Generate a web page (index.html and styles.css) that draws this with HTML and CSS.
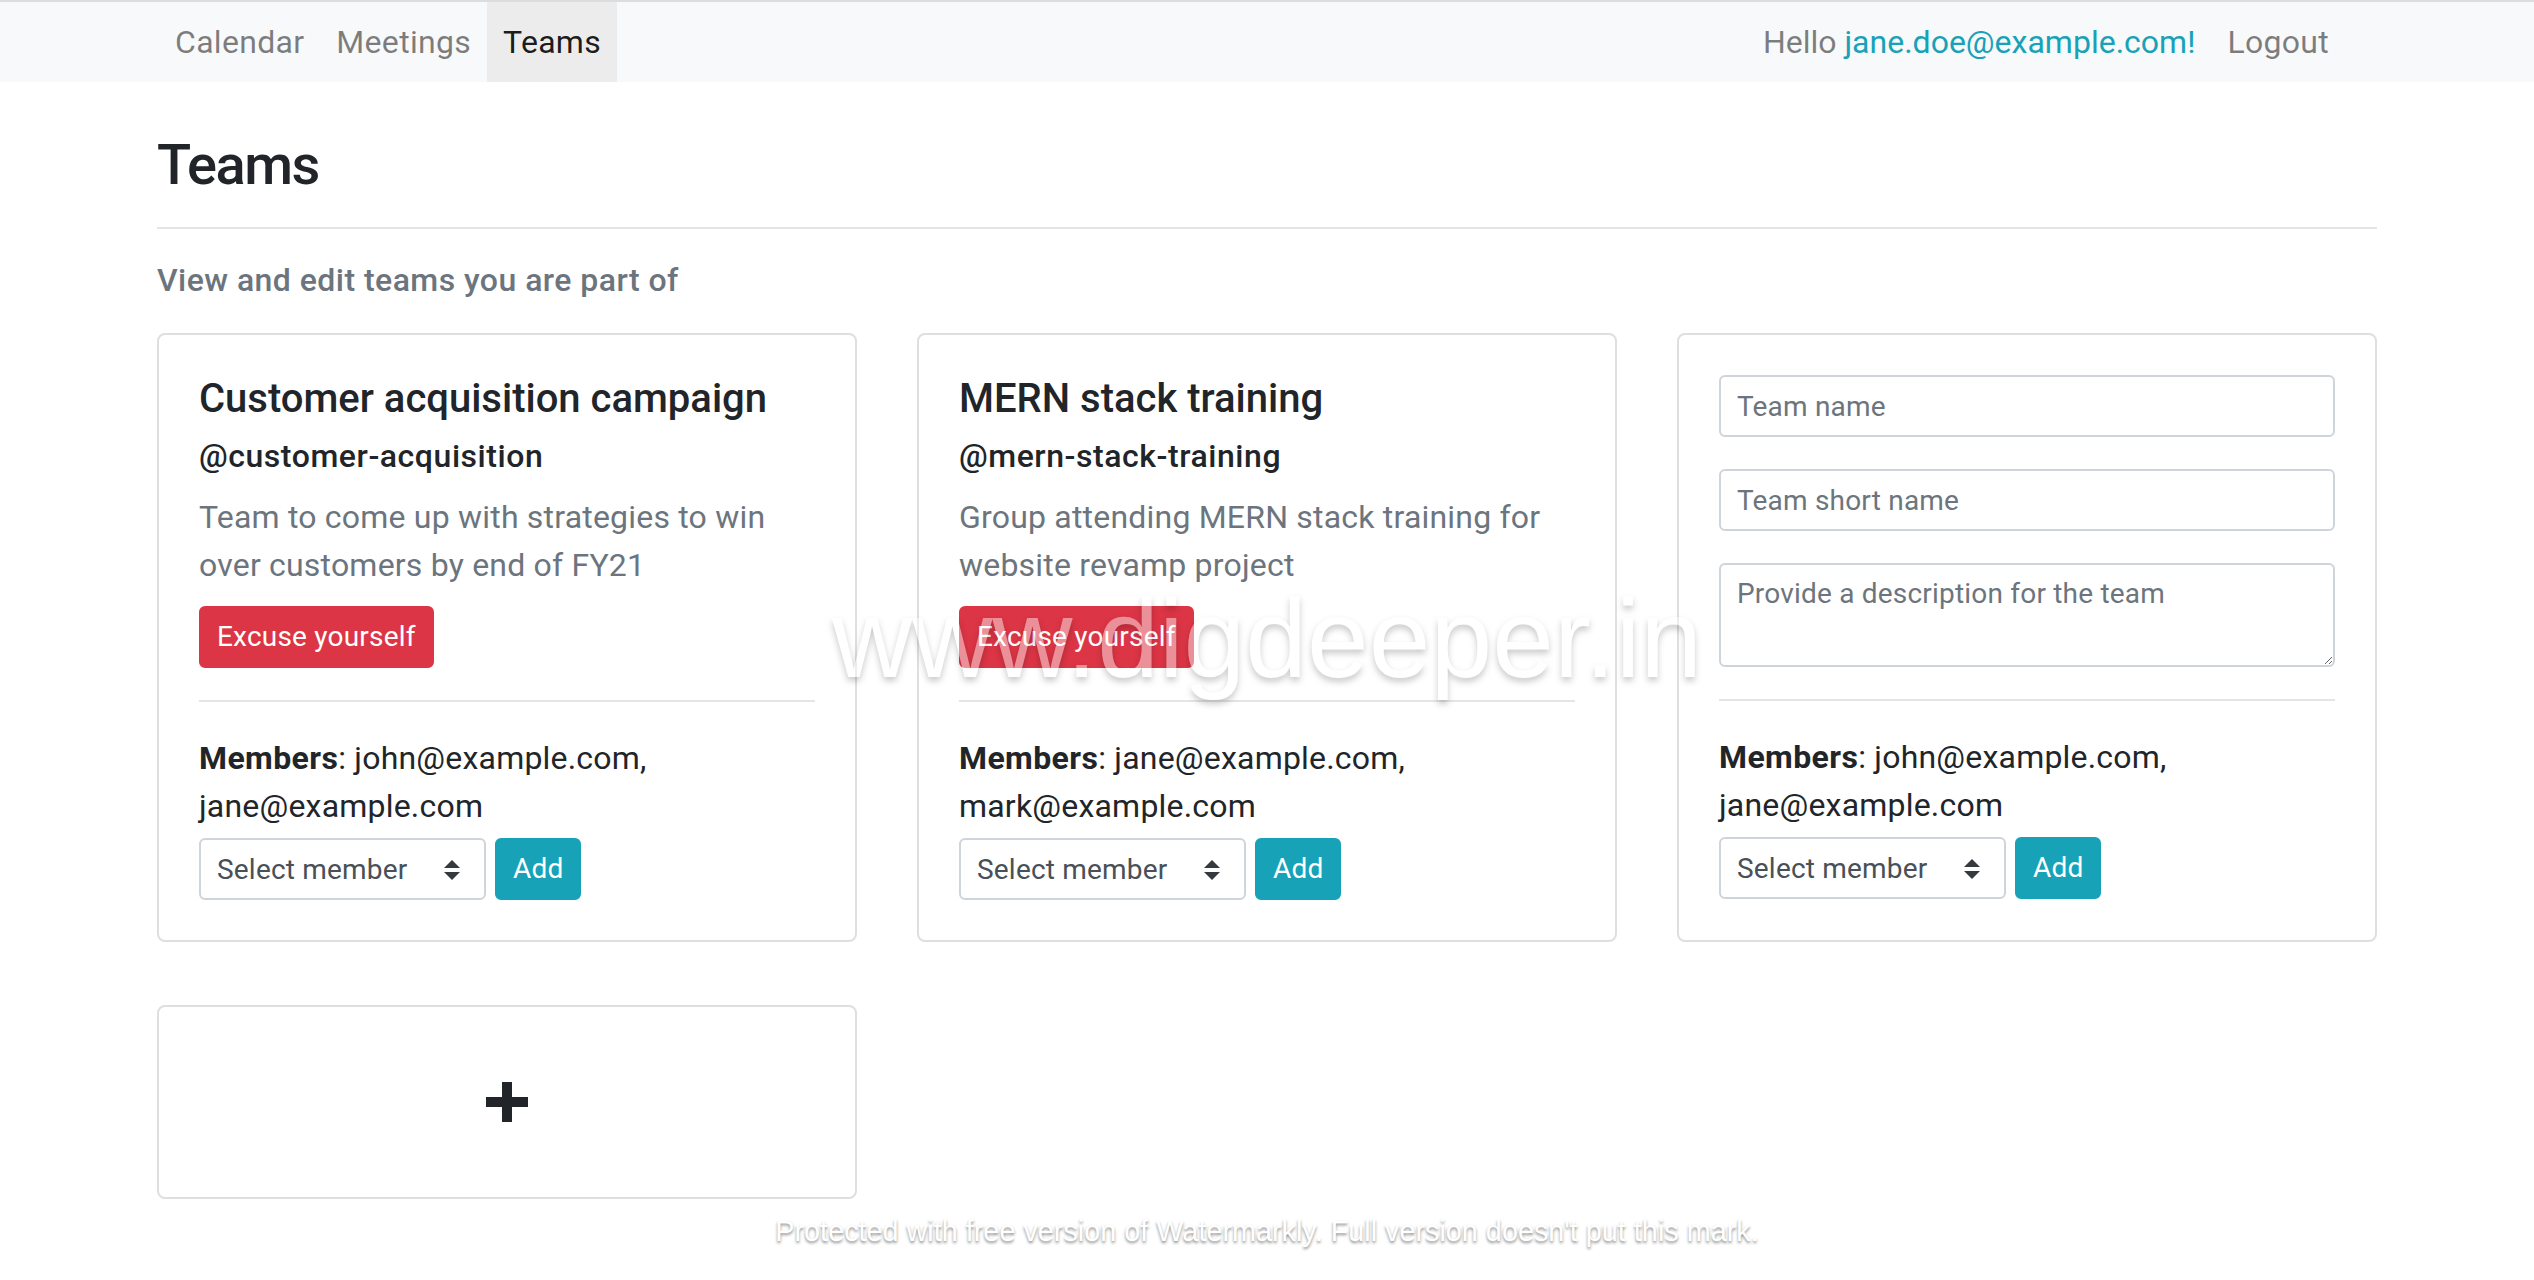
FILE: index.html
```html
<!DOCTYPE html>
<html lang="en">
<head>
<meta charset="utf-8">
<title>Teams</title>
<link rel="stylesheet" href="styles.css">
</head>
<body>
<nav class="navbar">
  <div class="nav-inner">
    <ul class="nav-list">
      <li><a class="nav-link" href="#">Calendar</a></li>
      <li><a class="nav-link" href="#">Meetings</a></li>
      <li><a class="nav-link active" href="#">Teams</a></li>
    </ul>
    <ul class="nav-list nav-right">
      <li><span class="nav-link nav-text">Hello <span class="user">jane.doe@example.com!</span></span></li>
      <li><a class="nav-link" href="#">Logout</a></li>
    </ul>
  </div>
</nav>

<main class="container">
  <h1 class="page-title">Teams</h1>
  <hr class="rule">
  <p class="page-sub">View and edit teams you are part of</p>

  <div class="team-grid">
    <div class="card">
      <div class="card-body">
        <h5 class="card-title">Customer acquisition campaign</h5>
        <h6 class="card-subtitle">@customer-acquisition</h6>
        <p class="card-text">Team to come up with strategies to win over customers by end of FY21</p>
        <button class="btn btn-danger">Excuse yourself</button>
        <hr class="card-rule">
        <p class="members"><strong>Members</strong>: john@example.com, jane@example.com</p>
        <div class="add-row">
          <div class="select">Select member<svg class="caret" width="16" height="20" viewBox="0 0 4 5"><path fill="#343a40" d="M2 0L0 2h4zm0 5L0 3h4z"/></svg></div>
          <button class="btn btn-info">Add</button>
        </div>
      </div>
    </div>

    <div class="card">
      <div class="card-body">
        <h5 class="card-title">MERN stack training</h5>
        <h6 class="card-subtitle">@mern-stack-training</h6>
        <p class="card-text">Group attending MERN stack training for website revamp project</p>
        <button class="btn btn-danger">Excuse yourself</button>
        <hr class="card-rule">
        <p class="members"><strong>Members</strong>: jane@example.com, mark@example.com</p>
        <div class="add-row">
          <div class="select">Select member<svg class="caret" width="16" height="20" viewBox="0 0 4 5"><path fill="#343a40" d="M2 0L0 2h4zm0 5L0 3h4z"/></svg></div>
          <button class="btn btn-info">Add</button>
        </div>
      </div>
    </div>

    <div class="card">
      <div class="card-body">
        <form class="team-form">
          <input class="form-control" type="text" placeholder="Team name">
          <input class="form-control" type="text" placeholder="Team short name">
          <textarea class="form-control textarea" placeholder="Provide a description for the team"></textarea>
        </form>
        <hr class="card-rule">
        <p class="members"><strong>Members</strong>: john@example.com, jane@example.com</p>
        <div class="add-row">
          <div class="select">Select member<svg class="caret" width="16" height="20" viewBox="0 0 4 5"><path fill="#343a40" d="M2 0L0 2h4zm0 5L0 3h4z"/></svg></div>
          <button class="btn btn-info">Add</button>
        </div>
      </div>
    </div>

    <div class="card add-card">
      <div class="card-body add-body">
        <svg width="42" height="40" viewBox="0 0 42 40"><rect x="0" y="15" width="42" height="10" fill="#212529"/><rect x="16" y="0" width="10" height="40" fill="#212529"/></svg>
      </div>
    </div>
  </div>
</main>

<div class="watermark">www.digdeeper.in</div>
<div class="watermark-note">Protected with free version of Watermarkly. Full version doesn't put this mark.</div>
</body>
</html>
```

FILE: styles.css
```css
* { box-sizing: border-box; }
html, body { margin: 0; padding: 0; }
body {
  font-family: Roboto, "Liberation Sans", Arial, sans-serif;
  font-size: 32px;
  line-height: 48px;
  color: #212529;
  background: #fff;
  position: relative;
  min-height: 1280px;
}

/* navbar */
.navbar {
  border-top: 2px solid #dcdddf;
  background: #f8f9fa;
  height: 82px;
}
.nav-inner {
  width: 2220px;
  margin: 0 auto;
  display: flex;
  justify-content: space-between;
}
.nav-list {
  list-style: none;
  margin: 0 0 0 2px;
  padding: 0;
  display: flex;
}
.nav-right { margin: 0 32px 0 0; }
.nav-link {
  display: block;
  padding: 16px;
  line-height: 48px;
  color: rgba(0, 0, 0, 0.5);
  text-decoration: none;
  letter-spacing: 0.3px;
}
.nav-text { letter-spacing: 0; }
.nav-link.active {
  background: #ececec;
  color: rgba(0, 0, 0, 0.9);
}
.user { color: #17a2b8; }

/* page */
.container {
  width: 2220px;
  margin: 0 auto;
}
.page-title {
  margin: 48px 0 27px;
  font-size: 56px;
  line-height: 70px;
  font-weight: 500;
  letter-spacing: -1.5px;
}
.rule {
  margin: 0;
  border: 0;
  border-top: 2px solid #e5e5e5;
}
.page-sub {
  margin: 27px 0 29px;
  color: #6c757d;
  font-weight: 500;
  letter-spacing: 0.45px;
}

.team-grid {
  display: grid;
  grid-template-columns: repeat(3, 700px);
  column-gap: 60px;
  row-gap: 63px;
}
.card {
  border: 2px solid #dfdfdf;
  border-radius: 8px;
  background: #fff;
}
.card-body { padding: 40px; }
.card-title {
  margin: 0 0 13px;
  font-size: 40px;
  line-height: 48px;
  font-weight: 500;
}
.card-subtitle {
  margin: 0 0 17px;
  font-size: 32px;
  line-height: 40px;
  font-weight: 500;
  letter-spacing: 0.55px;
}
.card-text {
  margin: 0 0 17px;
  color: #6c757d;
  letter-spacing: 0.2px;
}
.btn {
  display: inline-block;
  font-family: inherit;
  font-size: 28px;
  line-height: 42px;
  padding: 8px 16px;
  border: 2px solid transparent;
  border-radius: 6px;
  color: #fff;
  cursor: pointer;
  letter-spacing: 0.2px;
}
.btn-danger { background: #dc3545; border-color: #dc3545; vertical-align: top; }
.btn-info { background: #17a2b8; border-color: #17a2b8; }
.card-rule {
  margin: 32px 0;
  border: 0;
  border-top: 2px solid #e5e5e5;
}
.members { margin: 0 0 8px; letter-spacing: 0.2px; }
.members strong { font-weight: 700; letter-spacing: 0.4px; }
.add-row {
  display: flex;
  gap: 9px;
}
.select {
  width: 287px;
  height: 62px;
  display: flex;
  align-items: center;
  justify-content: space-between;
  padding: 2px 24px 0 16px;
  border: 2px solid #ced4da;
  border-radius: 6px;
  font-size: 28px;
  line-height: 42px;
  color: #495057;
  background: #fff;
  letter-spacing: 0.2px;
}
.caret { display: block; }

.team-form {
  display: flex;
  flex-direction: column;
  gap: 32px;
}
.form-control {
  display: block;
  width: 100%;
  height: 62px;
  padding: 8px 16px;
  font-family: inherit;
  font-size: 28px;
  line-height: 42px;
  color: #495057;
  border: 2px solid #ced4da;
  border-radius: 6px;
  background: #fff;
  margin: 0;
  letter-spacing: 0.2px;
}
.form-control::placeholder { color: #6c757d; }
.textarea {
  height: 104px;
  resize: vertical;
}

.add-body {
  height: 190px;
  display: flex;
  align-items: center;
  justify-content: center;
}
.add-body svg { display: block; }

/* watermark overlays */
.watermark {
  position: absolute;
  left: 832px;
  top: 584px;
  font-family: "Liberation Sans", Arial, sans-serif;
  font-size: 111px;
  line-height: 111px;
  color: #fff;
  opacity: 0.45;
  text-shadow: 0 4px 6px rgba(0, 0, 0, 0.45);
  white-space: nowrap;
  pointer-events: none;
}
.watermark-note {
  position: absolute;
  left: 0;
  right: 0;
  top: 1217px;
  text-align: center;
  font-family: "Liberation Sans", Arial, sans-serif;
  font-size: 28.8px;
  line-height: 29px;
  color: #fff;
  text-shadow: 0 2px 3px rgba(0, 0, 0, 0.45);
  white-space: nowrap;
  pointer-events: none;
}
```
